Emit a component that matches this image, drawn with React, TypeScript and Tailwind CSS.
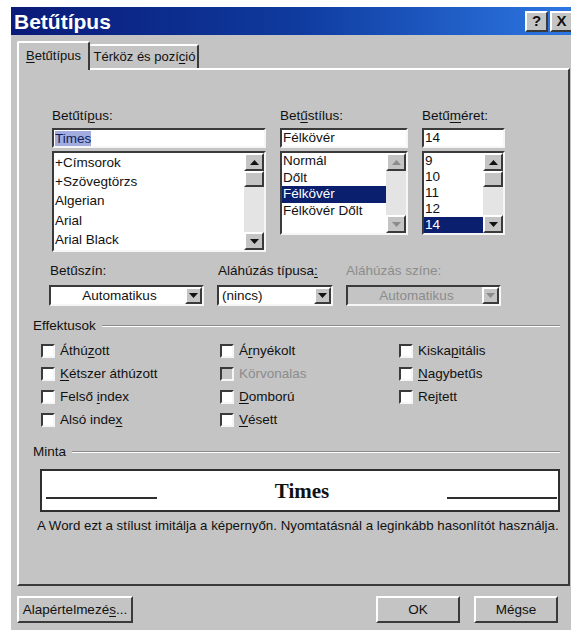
import React from "react";

// classic 3D edges
const raised =
  "border-2 border-t-white border-l-white border-r-[#3a3a3a] border-b-[#3a3a3a]";
const sunken =
  "border-2 border-t-[#3a3a3a] border-l-[#3a3a3a] border-r-[#f6f6f6] border-b-[#f6f6f6]";

function U({ children }: { children: React.ReactNode }) {
  return <span className="underline decoration-1 underline-offset-2">{children}</span>;
}

function Arrow({ dir, disabled }: { dir: "up" | "down"; disabled?: boolean }) {
  const fill = disabled ? "#8c8c8c" : "#111";
  return (
    <svg width="9" height="5" viewBox="0 0 9 5">
      {dir === "up" ? (
        <polygon points="4.5,0 9,5 0,5" fill={fill} />
      ) : (
        <polygon points="0,0 9,0 4.5,5" fill={fill} />
      )}
    </svg>
  );
}

function ScrollBar({ thumb, disabled }: { thumb?: boolean; disabled?: boolean }) {
  return (
    <div className="flex w-[20px] shrink-0 flex-col bg-[#e4e4e4]">
      <div className={`flex h-[18px] items-center justify-center bg-[#c4c4c4] ${raised}`}>
        <Arrow dir="up" disabled={disabled} />
      </div>
      {thumb && <div className={`h-[16px] bg-[#c4c4c4] ${raised}`} />}
      <div className="flex-1" />
      <div className={`flex h-[18px] items-center justify-center bg-[#c4c4c4] ${raised}`}>
        <Arrow dir="down" disabled={disabled} />
      </div>
    </div>
  );
}

function ListBox({
  items,
  selected,
  height,
  rowClass,
  thumb,
  disabled,
}: {
  items: string[];
  selected?: string;
  height: string;
  rowClass: string;
  thumb?: boolean;
  disabled?: boolean;
}) {
  return (
    <div className={`flex bg-white ${height} ${sunken}`}>
      <div className="flex-1 overflow-hidden">
        {items.map((item) => (
          <div
            key={item}
            className={`${rowClass} flex items-center whitespace-nowrap pl-[1px] ${
              item === selected ? "bg-[#0a1f6e] text-white" : ""
            }`}
          >
            {item}
          </div>
        ))}
      </div>
      <ScrollBar thumb={thumb} disabled={disabled} />
    </div>
  );
}

function Combo({
  value,
  width,
  center,
  disabled,
}: {
  value: string;
  width: string;
  center?: boolean;
  disabled?: boolean;
}) {
  return (
    <div
      className={`flex h-[21px] items-center ${width} ${sunken} ${
        disabled ? "bg-[#c4c4c4] text-[#8c8c8c]" : "bg-white"
      }`}
    >
      <div className={`flex-1 pl-[3px] ${center ? "text-center" : ""}`}>{value}</div>
      <div className={`flex h-[17px] w-[17px] items-center justify-center bg-[#c4c4c4] ${raised}`}>
        <Arrow dir="down" disabled={disabled} />
      </div>
    </div>
  );
}

function Check({ children, disabled }: { children: React.ReactNode; disabled?: boolean }) {
  return (
    <div className={`flex h-[23px] items-center gap-[5px] ${disabled ? "text-[#8c8c8c]" : ""}`}>
      <div className={`h-[14px] w-[14px] ${sunken} ${disabled ? "bg-[#c4c4c4]" : "bg-white"}`} />
      <span>{children}</span>
    </div>
  );
}

function GroupLabel({ children }: { children: React.ReactNode }) {
  return (
    <div className="flex h-[18px] items-center gap-[6px]">
      <span>{children}</span>
      <div className="h-[2px] flex-1 border-t border-b border-t-[#8a8a8a] border-b-white" />
    </div>
  );
}

function Button({ children, width }: { children: React.ReactNode; width: string }) {
  return (
    <div className={`flex h-[27px] items-center justify-center bg-[#c4c4c4] ${width} ${raised}`}>
      {children}
    </div>
  );
}

export default function App() {
  return (
    <div
      className="h-[630px] w-[571px] overflow-hidden bg-white pl-[11px] pt-[7px] text-[13.5px] leading-[18px] text-[#111]"
      style={{ fontFamily: '"Liberation Sans", Arial, sans-serif' }}
    >
      <div className="h-[640px] w-[565px] bg-[#c4c4c4]">
        {/* title bar */}
        <div className="flex h-[28px] items-center bg-gradient-to-r from-[#0a1a78] via-[#0f3a9e] to-[#2f78e4] pl-[3px] pr-[3px]">
          <span className="text-[21px] font-bold leading-none text-white">Betűtípus</span>
          <div className="ml-auto flex gap-[2px]">
            <div className={`flex h-[21px] w-[23px] items-center justify-center bg-[#c4c4c4] text-[15px] font-bold ${raised}`}>
              ?
            </div>
            <div className={`flex h-[21px] w-[23px] items-center justify-center bg-[#c4c4c4] text-[15px] font-bold ${raised}`}>
              X
            </div>
          </div>
        </div>

        <div className="px-[6px] pt-[6px]">
          {/* tabs */}
          <div className="relative z-10 flex h-[27px] items-end text-[13px]">
            <div className="-mb-[2px] flex h-[29px] w-[73px] items-center justify-center rounded-t-[2px] border-t-2 border-l-2 border-r-2 border-t-white border-l-white border-r-[#3a3a3a] bg-[#c4c4c4] pb-[2px]">
              <span>
                <U>B</U>etűtípus
              </span>
            </div>
            <div className="flex h-[24px] w-[109px] items-center justify-center rounded-t-[2px] border-t-2 border-r-2 border-t-white border-r-[#3a3a3a] pl-[2px]">
              <span>
                Térköz és pozí<U>c</U>ió
              </span>
            </div>
          </div>

          {/* panel */}
          <div className={`h-[518px] pl-[14px] pr-[8px] pt-[37px] ${raised}`}>
            {/* font, style, size */}
            <div className="flex gap-[14px] pl-[19px]">
              <div className="w-[214px]">
                <div className="mb-[3px]">
                  Betűtí<U>p</U>us:
                </div>
                <div className={`mb-[3px] flex h-[20px] items-center bg-white pl-[1px] ${sunken}`}>
                  <span className="bg-[#a3acdf] leading-[15px] text-[#0a1f5c]">Times</span>
                </div>
                <ListBox
                  items={["+Címsorok", "+Szövegtörzs", "Algerian", "Arial", "Arial Black"]}
                  height="h-[101px]"
                  rowClass="h-[19.4px]"
                  thumb
                />
              </div>
              <div className="w-[128px]">
                <div className="mb-[3px]">
                  Bet<U>ű</U>stílus:
                </div>
                <div className={`mb-[3px] flex h-[20px] items-center bg-white pl-[1px] ${sunken}`}>
                  Félkövér
                </div>
                <ListBox
                  items={["Normál", "Dőlt", "Félkövér", "Félkövér Dőlt"]}
                  selected="Félkövér"
                  height="h-[84px]"
                  rowClass="h-[16.5px]"
                  disabled
                />
              </div>
              <div className="w-[83px]">
                <div className="mb-[3px]">
                  Betű<U>m</U>éret:
                </div>
                <div className={`mb-[3px] flex h-[20px] items-center bg-white pl-[1px] ${sunken}`}>
                  14
                </div>
                <ListBox
                  items={["9", "10", "11", "12", "14"]}
                  selected="14"
                  height="h-[84px]"
                  rowClass="h-[16px]"
                  thumb
                />
              </div>
            </div>

            {/* colour and underline */}
            <div className="mt-[10px] flex gap-[13px] pl-[16px]">
              <div>
                <div className="mb-[5px] pl-[1px]">Betűszín:</div>
                <Combo value="Automatikus" width="w-[155px]" center />
              </div>
              <div>
                <div className="mb-[5px] pl-[1px]">
                  Aláhúzás típusa<U>:</U>
                </div>
                <Combo value="(nincs)" width="w-[116px]" />
              </div>
              <div>
                <div className="mb-[5px] text-[#8c8c8c]">Aláhúzás színe:</div>
                <Combo value="Automatikus" width="w-[155px]" center disabled />
              </div>
            </div>

            {/* effects */}
            <div className="mt-[11px]">
              <GroupLabel>Effektusok</GroupLabel>
              <div className="mt-[4px] grid grid-cols-[179px_179px_1fr] grid-rows-4 grid-flow-col pl-[8px]">
                <Check>
                  Áthú<U>z</U>ott
                </Check>
                <Check>
                  <U>K</U>étszer áthúzott
                </Check>
                <Check>
                  Felső <U>i</U>ndex
                </Check>
                <Check>
                  Alsó inde<U>x</U>
                </Check>
                <Check>
                  Á<U>r</U>nyékolt
                </Check>
                <Check disabled>Körvonalas</Check>
                <Check>
                  <U>D</U>omború
                </Check>
                <Check>
                  <U>V</U>ésett
                </Check>
                <Check>
                  Kiska<U>p</U>itális
                </Check>
                <Check>
                  <U>N</U>agybetűs
                </Check>
                <Check>
                  Re<U>j</U>tett
                </Check>
              </div>
            </div>

            {/* preview */}
            <div className="mt-[12px]">
              <GroupLabel>Minta</GroupLabel>
              <div className="ml-[7px] mt-[8px] flex h-[43px] items-center border-2 border-[#2e2e2e] bg-white pl-[4px] pr-[1px]">
                <div className="mt-[14px] h-[2px] w-[111px] bg-[#2e2e2e]" />
                <div
                  className="flex-1 text-center text-[21px] font-bold"
                  style={{ fontFamily: '"Liberation Serif", "Times New Roman", serif' }}
                >
                  Times
                </div>
                <div className="mt-[14px] h-[2px] w-[110px] bg-[#2e2e2e]" />
              </div>
              <div className="mt-[5px] whitespace-nowrap pl-[4px] text-[13.3px]">
                A Word ezt a stílust imitálja a képernyőn. Nyomtatásnál a leginkább hasonlítót használja.
              </div>
            </div>
          </div>

          {/* buttons */}
          <div className="mt-[10px] flex">
            <Button width="w-[116px]">
              Alapértelmezé<U>s</U>...
            </Button>
            <div className="ml-auto flex gap-[14px] pr-[12px]">
              <Button width="w-[84px]">OK</Button>
              <Button width="w-[84px]">Mégse</Button>
            </div>
          </div>
        </div>
      </div>
    </div>
  );
}
